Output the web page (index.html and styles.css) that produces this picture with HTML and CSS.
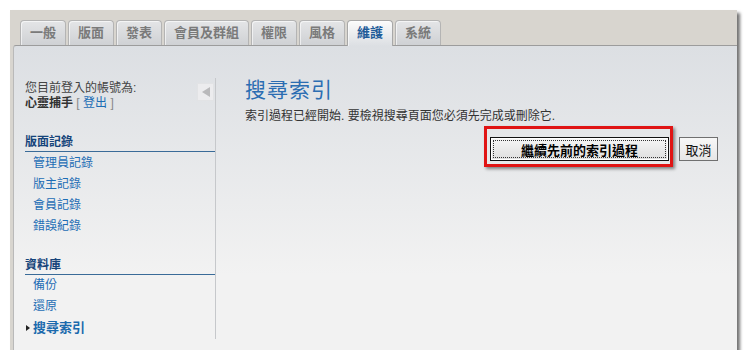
FILE: index.html
```html
<!DOCTYPE html>
<html lang="zh-Hant">
<head>
  <meta charset="UTF-8" />
  <title>搜尋索引</title>
  <link rel="stylesheet" href="styles.css">
</head>
<body>
  <div class="window">
    <!-- Pestañas del panel de control -->
    <ul class="tabs">
      <li>一般</li>
      <li>版面</li>
      <li>發表</li>
      <li>會員及群組</li>
      <li>權限</li>
      <li>風格</li>
      <li class="active">維護</li>
      <li>系統</li>
    </ul>
    <div class="panel">
      <div class="sidebar">
        <button class="collapse" title="隱藏"><span></span></button>
        <div class="user">
          <div>您目前登入的帳號為:</div>
          <div><b>心靈捕手</b> <span class="bracket">[</span> <a href="#">登出</a> <span class="bracket">]</span></div>
        </div>
        <div class="menu">
          <h3>版面記錄</h3>
          <ul>
            <li><a href="#">管理員記錄</a></li>
            <li><a href="#">版主記錄</a></li>
            <li><a href="#">會員記錄</a></li>
            <li><a href="#">錯誤紀錄</a></li>
          </ul>
        </div>
        <div class="menu">
          <h3>資料庫</h3>
          <ul>
            <li><a href="#">備份</a></li>
            <li><a href="#">還原</a></li>
            <li class="current"><a href="#">搜尋索引</a></li>
          </ul>
        </div>
      </div>
      <div class="main">
        <h1>搜尋索引</h1>
        <p>索引過程已經開始. 要檢視搜尋頁面您必須先完成或刪除它.</p>
        <div class="actions">
          <span class="highlight"><button class="btn-primary">繼續先前的索引過程</button></span>
          <button class="btn-cancel">取消</button>
        </div>
      </div>
    </div>
  </div>
</body>
</html>
```

FILE: styles.css
```css
/* Reset básico */
* {
  margin: 0;
  padding: 0;
  box-sizing: border-box;
}
body {
  background: #fff;
  font-family: "Liberation Sans", "Noto Sans CJK TC", sans-serif;
  font-size: 12px;
  color: #333;
}
a {
  color: #1d6db5;
  text-decoration: none;
}
/* Ventana principal */
.window {
  margin: 10px 0 0 10px;
  width: 727px;
  height: 340px;
  background: #d8d5cf;
  box-shadow: 3px 3px 3px rgba(0, 0, 0, 0.55);
  display: flex;
  flex-direction: column;
}
/* Pestañas */
.tabs {
  list-style: none;
  display: flex;
  align-items: flex-start;
  gap: 2px;
  padding: 10px 0 0 10px;
  height: 35px;
}
.tabs li {
  height: 25px;
  padding: 0 9px;
  line-height: 23px;
  font-size: 13px;
  font-weight: bold;
  color: #7a7a7a;
  border: 1px solid #b4b4b4;
  border-bottom: none;
  border-radius: 4px 4px 0 0;
  background: linear-gradient(#e4e5e7, #cfd1d4);
  box-shadow: inset 1px 1px 0 rgba(255, 255, 255, 0.6);
}
.tabs li.active {
  position: relative;
  z-index: 1;
  height: 26px;
  color: #1f5c99;
  border-color: #a8a8a8;
  background: linear-gradient(#fbfbfb, #dcdfe3);
}
/* Panel de contenido */
.panel {
  flex: 1;
  margin-left: 3px;
  border-top: 1px solid #9c9c9c;
  border-left: 1px solid #b9b9b9;
  border-top-left-radius: 3px;
  background: linear-gradient(#dcdfe3, #f2f2f2 75%);
  display: flex;
  padding: 0 19px 12px 11px;
}
.sidebar {
  position: relative;
  width: 191px;
  margin-top: 32px;
  border-right: 1px solid #c6c8cb;
  padding-top: 3px;
}
.collapse {
  position: absolute;
  top: 5px;
  right: 1px;
  width: 17px;
  height: 18px;
  border: 1px solid #e2e3e5;
  background: #ececee;
  display: flex;
  align-items: center;
  justify-content: center;
}
.collapse span {
  width: 0;
  height: 0;
  border-top: 5px solid transparent;
  border-bottom: 5px solid transparent;
  border-right: 8px solid #b9b9bb;
}
.user {
  line-height: 15px;
  color: #444;
}
.user b {
  color: #333;
}
.user .bracket {
  color: #888;
}
.menu {
  margin-top: 23px;
}
.menu ul {
  list-style: none;
  padding-top: 1px;
}
.menu + .menu {
  margin-top: 20px;
}
.menu + .menu ul {
  padding-top: 0;
}
.menu h3 {
  font-size: 12px;
  line-height: 16px;
  color: #16447a;
  border-bottom: 1px solid #3a6b98;
  padding-bottom: 1px;
}
.menu li {
  line-height: 21px;
  padding-left: 8px;
  position: relative;
}
.menu li.current a {
  font-weight: bold;
  font-size: 13px;
  color: #1b6aad;
}
.menu li.current::before {
  content: "";
  position: absolute;
  left: 1px;
  top: 8px;
  border-top: 3px solid transparent;
  border-bottom: 3px solid transparent;
  border-left: 4px solid #222;
}
/* Área principal */
.main {
  flex: 1;
  padding: 31px 0 0 29px;
}
.main h1 {
  font-size: 21px;
  font-weight: normal;
  line-height: 26px;
  color: #2b6db2;
  letter-spacing: 1px;
}
.main p {
  margin-top: 6px;
  line-height: 15px;
}
.actions {
  margin-top: 2px;
  display: flex;
  justify-content: flex-end;
  align-items: flex-start;
  gap: 6px;
}
.highlight {
  display: block;
  border: 3px solid #e01414;
  padding: 8px 1px 3px 3px;
  box-shadow: 2px 2px 3px rgba(0, 0, 0, 0.45);
}
.btn-primary {
  display: block;
  width: 179px;
  height: 24px;
  border: 1px solid #111;
  box-shadow: inset 0 0 0 1px #fff;
  outline: 1px dotted #333;
  outline-offset: -4px;
  background: linear-gradient(#f6f6f6, #dedede);
  font-family: inherit;
  font-size: 13px;
  font-weight: bold;
  color: #000;
}
.btn-cancel {
  margin-top: 11px;
  width: 39px;
  height: 24px;
  border: 1px solid #707070;
  background: linear-gradient(#f7f7f7, #e6e6e6);
  font-family: inherit;
  font-size: 13px;
  color: #111;
}
```
